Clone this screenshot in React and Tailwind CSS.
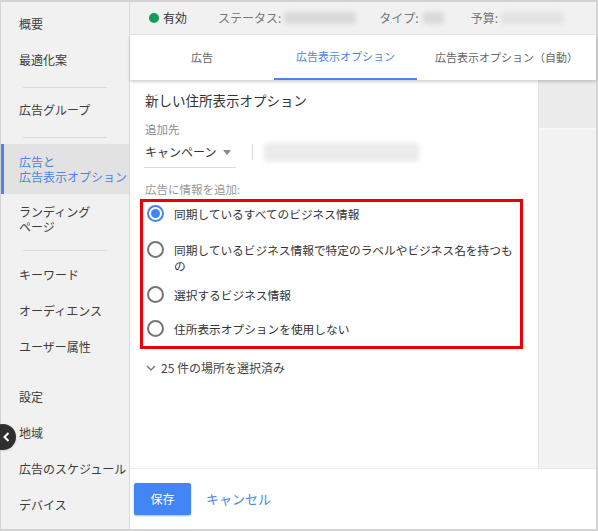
import React from 'react';

const font = "font-['Noto_Sans_CJK_JP','Noto_Sans',sans-serif]";

const SideItem = ({ children, className = '' }) => (
  <div className={`h-[36px] flex items-center pl-[18px] text-[12px] text-[#3c3c3c] ${className}`}>{children}</div>
);

const Divider = ({ className = '' }) => <div className={`mx-[22px] h-px bg-[#dcdcdc] ${className}`} />;

const Radio = ({ checked }) => (
  <span
    className={`shrink-0 w-[17px] h-[17px] rounded-full border-2 flex items-center justify-center ${
      checked ? 'border-[#4285f4]' : 'border-[#757575]'
    }`}
  >
    {checked && <span className="w-[9px] h-[9px] rounded-full bg-[#4285f4]" />}
  </span>
);

const Blur = ({ className = '' }) => <span className={`block rounded-sm blur-[2px] ${className}`} />;

export default function App() {
  const options = [
    { label: '同期しているすべてのビジネス情報', checked: true, mt: 'mt-[4px]' },
    {
      label: (
        <>
          同期しているビジネス情報で特定のラベルやビジネス名を持つも
          <br />の
        </>
      ),
      mt: 'mt-[20px]',
    },
    { label: '選択するビジネス情報', mt: 'mt-[13px]' },
    { label: '住所表示オプションを使用しない', mt: 'mt-[18px]' },
  ];

  return (
    <div className={`relative w-[598px] h-[531px] overflow-hidden bg-white ${font}`}>
      <div className="flex h-full border-t-2 border-l border-r-2 border-b-2 border-[#d3d3d3]">
        {/* sidebar */}
        <aside className="w-[129px] shrink-0 bg-[#f1f1f1] border-r border-[#dadada] pt-[4px]">
          <SideItem>概要</SideItem>
          <SideItem>最適化案</SideItem>
          <Divider className="mt-[9px]" />
          <SideItem className="mt-[4px]">広告グループ</SideItem>
          <Divider className="mt-[9px]" />
          <div className="mt-[6px] h-[50px] bg-[#e2e2e2] border-l-[3px] border-[#4a86e8] flex items-center pl-[15px]">
            <div className="text-[12px] leading-[15px] text-[#4a86e8]">
              広告と
              <br />
              広告表示オプション
            </div>
          </div>
          <div className="h-[50px] flex items-center pl-[18px]">
            <div className="text-[12px] leading-[15px] text-[#3c3c3c]">
              ランディング
              <br />
              ページ
            </div>
          </div>
          <Divider className="mt-[6px]" />
          <SideItem className="mt-[6px]">キーワード</SideItem>
          <SideItem>オーディエンス</SideItem>
          <SideItem>ユーザー属性</SideItem>
          <SideItem className="mt-[14px]">設定</SideItem>
          <SideItem>地域</SideItem>
          <SideItem>広告のスケジュール</SideItem>
          <SideItem>デバイス</SideItem>
        </aside>

        {/* main */}
        <main className="flex-1 flex flex-col min-w-0">
          <div className="h-[33px] shrink-0 bg-[#f1f1f1] border-b border-[#e2e2e2] flex items-center pl-[19px] text-[12px] text-[#555]">
            <span className="w-[10px] h-[10px] rounded-full bg-[#0f9d58]" />
            <span className="ml-[4px] text-[#333]">有効</span>
            <span className="ml-[31px] text-[#777]">ステータス:</span>
            <Blur className="ml-[3px] w-[72px] h-[12px] bg-[#d9d9d9]" />
            <span className="ml-[23px] text-[#777]">タイプ:</span>
            <Blur className="ml-[4px] w-[21px] h-[12px] bg-[#d9d9d9]" />
            <span className="ml-[27px] text-[#777]">予算:</span>
            <Blur className="ml-[3px] w-[63px] h-[12px] bg-[#e3e3e3]" />
          </div>

          <div className="relative z-10 h-[45px] shrink-0 bg-white flex text-[11px] shadow-[0_2px_3px_rgba(0,0,0,0.18)]">
            <div className="w-[144px] flex items-center justify-center text-[#666]">広告</div>
            <div className="w-[143px] flex items-center justify-center text-[#4a86e8] border-b-2 border-[#4a86e8]">
              広告表示オプション
            </div>
            <div className="flex-1 flex items-center justify-center text-[#666]">広告表示オプション（自動）</div>
          </div>

          <div className="flex-1 flex min-h-0">
            <section className="flex-1 pl-[15px] pt-[10px]">
              <h2 className="text-[13.5px] leading-[20px] text-[#333] font-normal">新しい住所表示オプション</h2>
              <div className="mt-[11px] text-[11.5px] leading-[16px] text-[#8a8a8a]">追加先</div>
              <div className="mt-[3px] flex items-start">
                <div className="w-[92px] border-b border-[#dcdcdc] pb-[3px] -ml-[1px]">
                  <div className="h-[24px] flex items-center pl-[1px] text-[12px] text-[#333]">
                    キャンペーン
                    <svg width="8" height="5" viewBox="0 0 8 5" className="ml-[7px]">
                      <path d="M0 0h8L4 5z" fill="#888" />
                    </svg>
                  </div>
                </div>
                <span className="ml-[16px] mt-[4px] w-px h-[16px] bg-[#dcdcdc]" />
                <Blur className="ml-[11px] mt-[3px] w-[155px] h-[19px] bg-[#ebebeb]" />
              </div>
              <div className="mt-[13px] text-[11.5px] leading-[16px] text-[#999]">広告に情報を追加:</div>

              <div className="mt-[2px] -ml-[5px] w-[383px] h-[150px] border-[3px] border-[#e8000b] pl-[4px]">
                {options.map((o, i) => (
                  <div key={i} className={`flex items-start ${o.mt}`}>
                    <span className="mt-[-1px]">
                      <Radio checked={o.checked} />
                    </span>
                    <span className="ml-[10px] whitespace-nowrap text-[11.7px] leading-[16px] text-[#333]">
                      {o.label}
                    </span>
                  </div>
                ))}
              </div>

              <div className="mt-[11px] flex items-center text-[12px] leading-[16px] text-[#444]">
                <svg width="10" height="6" viewBox="0 0 10 6" className="ml-[1px]">
                  <path d="M1 1l4 4 4-4" fill="none" stroke="#777" strokeWidth="1.4" />
                </svg>
                <span className="ml-[5px]">25 件の場所を選択済み</span>
              </div>
            </section>
            <div className="w-[58px] shrink-0 bg-[#f2f2f2] border-l border-[#e6e6e6]">
              <div className="h-[50px] bg-[#ececec] border-b-2 border-[#f7f7f7]" />
            </div>
          </div>

          <footer className="h-[61px] shrink-0 border-t border-[#ebebeb] flex items-start pt-[14px] pl-[4px]">
            <button className="w-[57px] h-[32px] rounded-[2px] bg-[#4285f4] text-white text-[12px] shadow-[0_1px_2px_rgba(0,0,0,0.3)]">
              保存
            </button>
            <button className="ml-[15px] h-[32px] text-[13px] text-[#4a86e8]">キャンセル</button>
          </footer>
        </main>
      </div>

      {/* collapse handle */}
      <div className="absolute left-[-10px] top-[424px] w-[26px] h-[26px] rounded-full bg-[#2f2f2f] flex items-center justify-end pr-[6px] shadow">
        <svg width="7" height="10" viewBox="0 0 7 10">
          <path d="M5.5 1L1.5 5l4 4" fill="none" stroke="#fff" strokeWidth="2" />
        </svg>
      </div>
    </div>
  );
}
